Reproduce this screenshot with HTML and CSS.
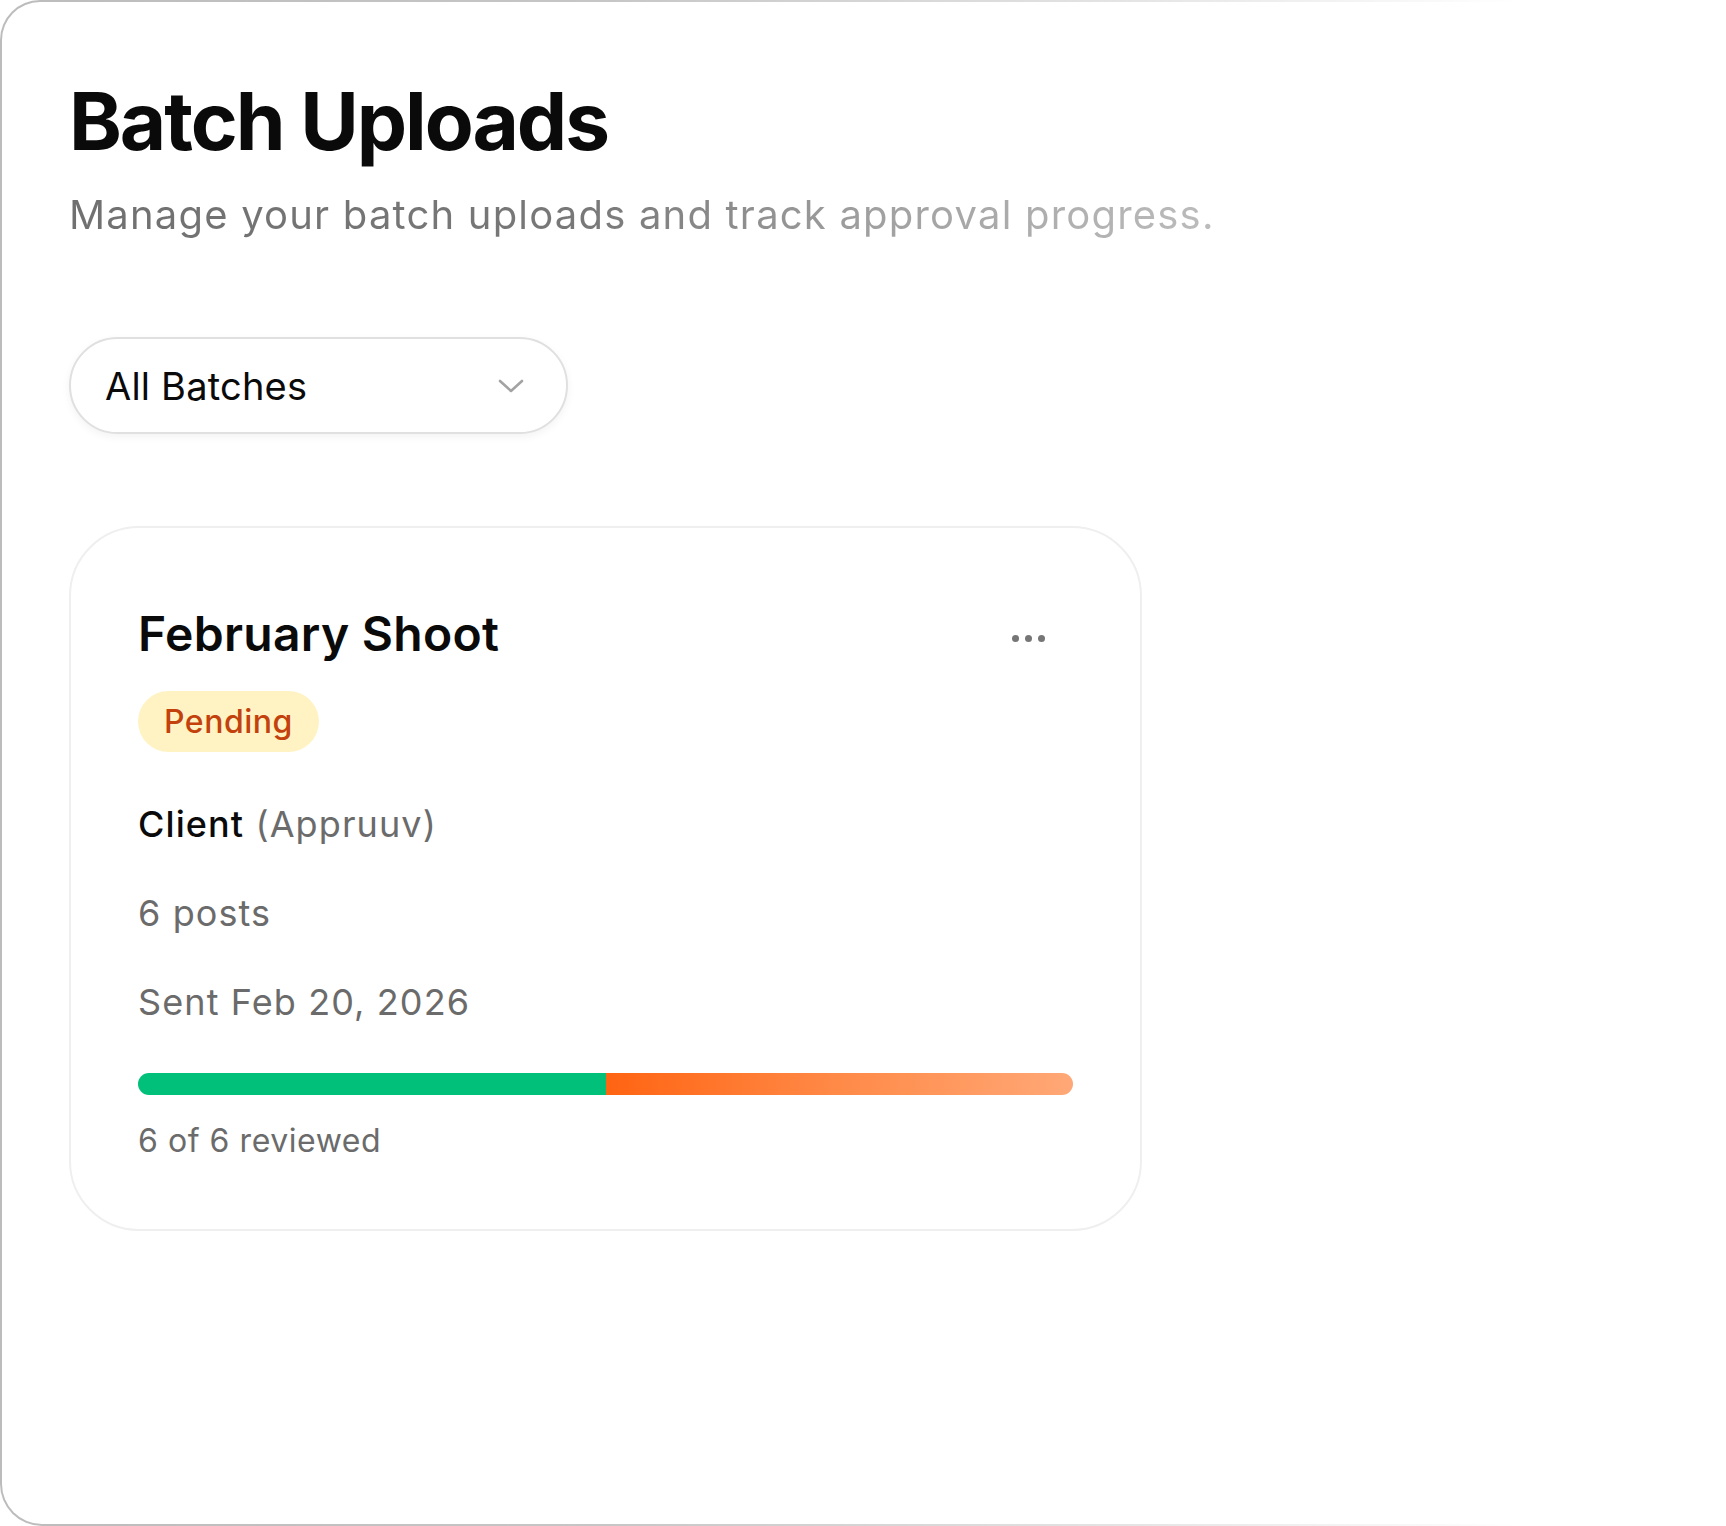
FILE: index.html
```html
<!DOCTYPE html>
<html lang="en">
<head>
<meta charset="utf-8">
<title>Batch Uploads</title>
<link rel="stylesheet" href="styles.css">
</head>
<body>
<div class="frame">
  <main class="page">
    <h1 class="title">Batch Uploads</h1>
    <p class="subtitle"><span>Manage your batch uploads and track approval progress.</span></p>

    <button class="select" type="button">
      <span class="select-label">All Batches</span>
      <svg class="chevron" width="26" height="14" viewBox="0 0 26 14" aria-hidden="true">
        <path d="M2 2 L13 12 L24 2" fill="none" stroke="#a3a3a3" stroke-width="2.6" stroke-linecap="round" stroke-linejoin="round"/>
      </svg>
    </button>

    <section class="card">
      <div class="card-head">
        <h2 class="card-title">February Shoot</h2>
        <button class="menu" type="button" aria-label="More options">
          <span class="dot"></span><span class="dot"></span><span class="dot"></span>
        </button>
      </div>
      <span class="badge">Pending</span>
      <p class="line client"><strong>Client</strong> <span class="muted">(Appruuv)</span></p>
      <p class="line">6 posts</p>
      <p class="line">Sent Feb 20, 2026</p>
      <div class="progress">
        <div class="seg approved" style="width: 50%"></div>
        <div class="seg pending" style="width: 50%"></div>
      </div>
      <p class="reviewed">6 of 6 reviewed</p>
    </section>
  </main>
</div>
</body>
</html>
```

FILE: styles.css
```css
* { box-sizing: border-box; }

html, body {
  margin: 0;
  padding: 0;
  background: #ffffff;
}

body {
  font-family: Inter, "Noto Sans", "Liberation Sans", sans-serif;
  color: #0a0a0a;
}

.frame {
  width: 1726px;
  height: 1526px;
  padding: 2px 0 2px 2px;
  border-radius: 40px 0 0 42px;
  background: linear-gradient(90deg, #bcbcbc 0%, #c6c6c6 35%, #e4e4e4 65%, #ffffff 88%);
}

.page {
  height: 100%;
  background: #ffffff;
  border-radius: 38px 0 0 40px;
  padding: 71px 0 0 67px;
}

.title {
  margin: 0;
  font-size: 80px;
  line-height: 96px;
  font-weight: 700;
  letter-spacing: -0.026em;
  color: #0a0a0a;
}

.subtitle {
  margin: 22px 0 0;
  font-size: 40px;
  line-height: 48px;
  font-weight: 400;
  letter-spacing: 1.2px;
}

.subtitle span {
  display: inline-block;
  background: linear-gradient(90deg, #707070 0%, #787878 45%, #a0a0a0 70%, #bcbcbc 100%);
  -webkit-background-clip: text;
  background-clip: text;
  color: transparent;
}

.select {
  margin-top: 98px;
  width: 499px;
  height: 97px;
  border: 2px solid #e0e0e0;
  border-radius: 49px;
  background: #ffffff;
  box-shadow: 0 3px 8px rgba(0, 0, 0, 0.05);
  display: flex;
  align-items: center;
  justify-content: space-between;
  padding: 0 42px 0 34px;
  font-family: inherit;
  cursor: pointer;
}

.select-label {
  font-size: 38px;
  font-weight: 400;
  color: #0a0a0a;
  letter-spacing: 0.2px;
}

.chevron { display: block; }

.card {
  margin-top: 92px;
  width: 1073px;
  border: 2px solid #efefef;
  border-radius: 70px;
  padding: 77px 67px 69px 67px;
  background: #ffffff;
}

.card-head {
  display: flex;
  align-items: center;
  justify-content: space-between;
}

.card-title {
  margin: 0;
  font-size: 48px;
  line-height: 58px;
  font-weight: 600;
  letter-spacing: 0.3px;
  color: #0a0a0a;
}

.menu {
  border: 0;
  background: transparent;
  padding: 0;
  margin: 8px 28px 0 0;
  display: flex;
  gap: 6px;
  cursor: pointer;
}

.dot {
  width: 7px;
  height: 7px;
  border-radius: 50%;
  background: #767676;
}

.badge {
  display: inline-block;
  margin-top: 28px;
  height: 61px;
  line-height: 61px;
  padding: 0 26px;
  border-radius: 31px;
  background: #fff3c4;
  color: #c2410c;
  font-size: 32px;
  font-weight: 500;
  letter-spacing: 0.5px;
}

.line {
  margin: 45px 0 0;
  font-size: 36px;
  line-height: 44px;
  color: #6b6b6b;
  letter-spacing: 1.1px;
}

.client { margin-top: 50px; }

.client strong {
  font-weight: 500;
  color: #0a0a0a;
}

.muted { color: #6b6b6b; }

.progress {
  margin-top: 49px;
  height: 22px;
  border-radius: 11px;
  overflow: hidden;
  display: flex;
}

.seg { height: 100%; }

.approved { background: #00c07a; }

.pending { background: linear-gradient(90deg, #ff6412 0%, #ff8a48 50%, #ffa877 100%); }

.reviewed {
  margin: 26px 0 0;
  font-size: 32px;
  line-height: 39px;
  color: #6b6b6b;
  letter-spacing: 0.55px;
}
```
